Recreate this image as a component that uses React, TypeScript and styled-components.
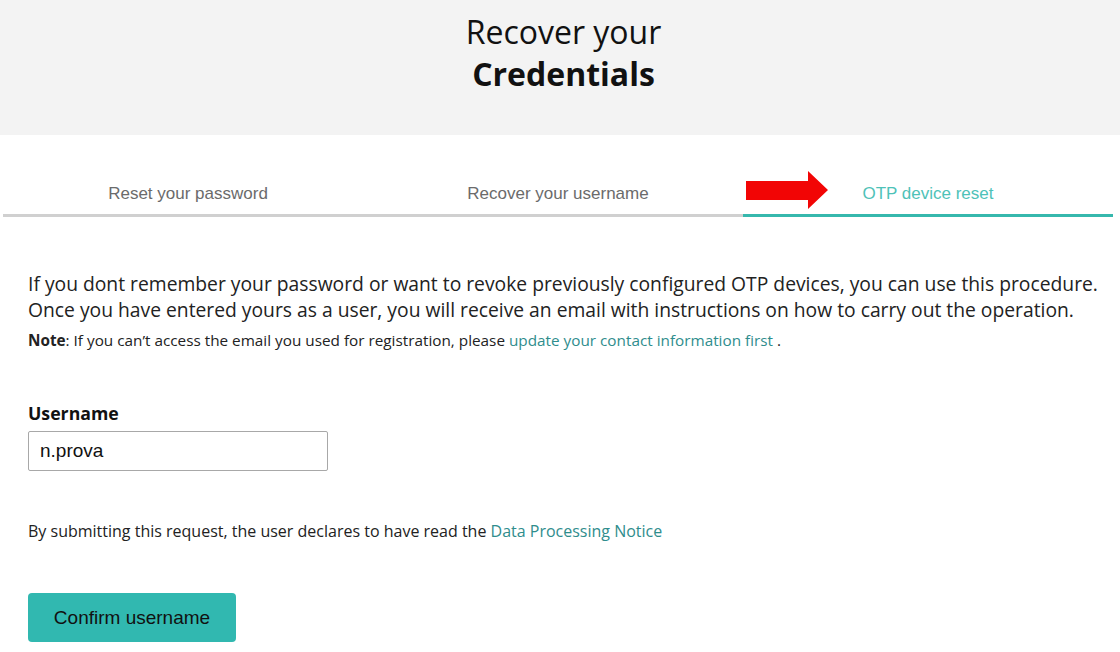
import React from 'react'
import styled, { createGlobalStyle } from 'styled-components'

const GlobalStyle = createGlobalStyle`
  html, body {
    margin: 0;
    padding: 0;
    background: #fff;
  }
  body {
    font-family: 'Open Sans', 'Liberation Sans', sans-serif;
    color: #222;
  }
`

const Page = styled.div`
  width: 1120px;
  height: 652px;
  overflow: hidden;
  background: #fff;
`

const Hero = styled.header`
  height: 135px;
  background: #f3f3f3;
  display: flex;
  flex-direction: column;
  align-items: center;
  padding: 11px 0 0 7px;
  box-sizing: border-box;
`

const HeroLine = styled.div<{ $bold?: boolean }>`
  font-size: 32px;
  line-height: 42px;
  font-weight: ${({ $bold }) => ($bold ? 700 : 400)};
  color: #111;
`

const Tabs = styled.nav`
  display: grid;
  grid-template-columns: repeat(3, 1fr);
  margin: 36px 7px 0 3px;
`

const Tab = styled.div<{ $active?: boolean }>`
  position: relative;
  height: 46px;
  display: flex;
  align-items: center;
  justify-content: center;
  font-family: 'Liberation Sans', Arial, sans-serif;
  font-size: 17px;
  color: ${({ $active }) => ($active ? '#4ec2b8' : '#6b6b6b')};
  border-bottom: 3px solid ${({ $active }) => ($active ? '#36b8ad' : '#d0d0d0')};
  padding-top: 2px;
  box-sizing: border-box;
`

// red pointer drawn over the active tab
const Arrow = styled.svg`
  position: absolute;
  left: 3px;
  top: 0;
`

const Content = styled.main`
  padding: 54px 20px 0 28px;
`

const Intro = styled.p`
  margin: 0;
  font-size: 19.3px;
  line-height: 26px;
  color: #222;
  white-space: nowrap;
`

const Note = styled.p`
  margin: 7px 0 0;
  font-size: 15.3px;
  line-height: 20px;
  color: #222;
`

const Link = styled.a`
  color: #2f8d8d;
  text-decoration: none;
`

const Field = styled.div`
  margin-top: 51px;
  display: flex;
  flex-direction: column;
`

const Label = styled.label`
  font-size: 17.7px;
  font-weight: 700;
  line-height: 24px;
  color: #111;
`

const Input = styled.input`
  margin-top: 6px;
  width: 300px;
  height: 40px;
  box-sizing: border-box;
  border: 1px solid #a8a8a8;
  border-radius: 2px;
  padding: 0 11px;
  font-family: 'Liberation Sans', Arial, sans-serif;
  font-size: 19px;
  color: #111;
  outline: none;
`

const Consent = styled.p`
  margin: 49px 0 0;
  font-size: 16px;
  line-height: 22px;
  color: #222;
`

const Button = styled.button`
  margin-top: 51px;
  width: 208px;
  height: 49px;
  border: none;
  border-radius: 4px;
  background: #31b8b0;
  font-family: 'Liberation Sans', Arial, sans-serif;
  font-size: 19px;
  color: #111;
  cursor: pointer;
`

export default function App() {
  return (
    <Page>
      <GlobalStyle />
      <Hero>
        <HeroLine>Recover your</HeroLine>
        <HeroLine $bold>Credentials</HeroLine>
      </Hero>
      <Tabs>
        <Tab>Reset your password</Tab>
        <Tab>Recover your username</Tab>
        <Tab $active>
          <Arrow width="84" height="40" viewBox="0 0 84 40">
            <polygon points="0,10 62,10 62,0 82,19 62,38 62,29 0,29" fill="#f20505" />
          </Arrow>
          OTP device reset
        </Tab>
      </Tabs>
      <Content>
        <Intro>
          If you dont remember your password or want to revoke previously configured OTP devices, you can use this procedure.
          <br />
          Once you have entered yours as a user, you will receive an email with instructions on how to carry out the operation.
        </Intro>
        <Note>
          <b>Note</b>: If you can’t access the email you used for registration, please <Link href="#">update your contact information first</Link> .
        </Note>
        <Field>
          <Label htmlFor="username">Username</Label>
          <Input id="username" defaultValue="n.prova" />
        </Field>
        <Consent>
          By submitting this request, the user declares to have read the <Link href="#">Data Processing Notice</Link>
        </Consent>
        <Button>Confirm username</Button>
      </Content>
    </Page>
  )
}
